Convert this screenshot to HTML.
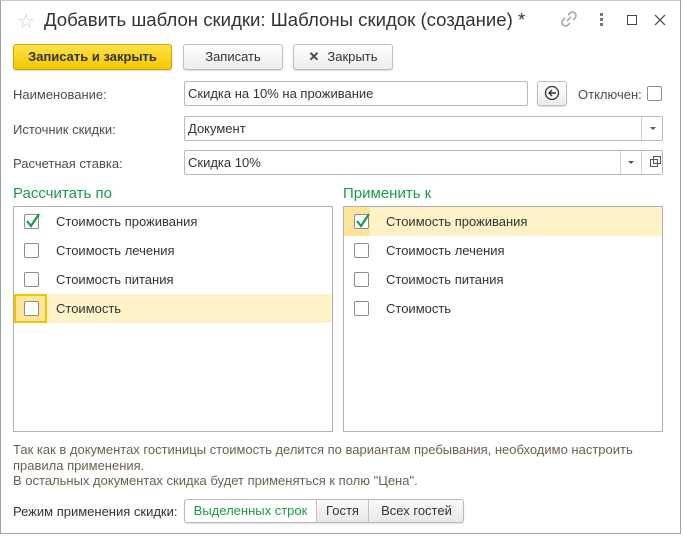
<!DOCTYPE html>
<html><head><meta charset="utf-8"><style>
*{box-sizing:border-box;margin:0;padding:0}
body{width:683px;height:536px;background:#fff;font-family:"Liberation Sans",sans-serif;font-size:13px;color:#333;position:relative;overflow:hidden}
.a{position:absolute}
.frame{left:0;top:0;width:681px;height:534px;border:1px solid #a0a0a0;border-top:1px solid #c8c8c8}
.btn{position:absolute;height:26px;border:1px solid #bdbdbd;border-radius:3px;background:linear-gradient(#fff,#ececec);text-align:center;line-height:24px;font-size:13px;color:#333;box-shadow:0 1px 1px rgba(0,0,0,.15)}
.inp{position:absolute;height:25px;border:1px solid #b9b9b9;border-radius:2px;background:#fff;line-height:23px;padding-left:3px;font-size:13px;color:#333}
.lbl{position:absolute;font-size:13px;color:#4d4d4d}
.sep{position:absolute;top:0;width:1px;height:23px;background:#d0d0d0}
.tri{position:absolute;top:10px;width:0;height:0;border-left:3px solid transparent;border-right:3px solid transparent;border-top:3px solid #555}
.list{position:absolute;border:1px solid #b0b0b0;background:#fff}
.row{position:absolute;left:0;width:318px;height:29px}
.cb{position:absolute;left:10px;top:7px;width:15px;height:15px;border:1px solid #8c8c8c;border-radius:2px;background:#fff}
.rt{position:absolute;left:42px;top:7px;font-size:13px;color:#333}
.hd{position:absolute;font-size:15px;color:#1a9a4a}
.note{position:absolute;left:13px;font-size:13px;color:#6b6050}
</style></head><body>
<div class="a frame"></div>
<div class="a" style="left:17px;top:9px;font-size:20px;color:#c8c8c8">☆</div>
<div class="a" style="left:44px;top:9px;font-size:18.6px;color:#333">Добавить шаблон скидки: Шаблоны скидок (создание) *</div>
<svg class="a" style="left:561px;top:11px" width="16" height="16" viewBox="0 0 16 16"><path d="M6 10 L10 6 M7 4 L9 2 a3 3 0 0 1 5 5 L12 9 M9 12 L7 14 a3 3 0 0 1 -5 -5 L4 7" stroke="#999" stroke-width="1.3" fill="none"/></svg>
<div class="a" style="left:600px;top:13px;width:3px;height:3px;background:#777;box-shadow:0 5px 0 #777,0 10px 0 #777"></div>
<div class="a" style="left:627px;top:15px;width:10px;height:10px;border:1.5px solid #444"></div>
<svg class="a" style="left:654px;top:14px" width="12" height="12"><path d="M1 1 L11 11 M11 1 L1 11" stroke="#555" stroke-width="1.3"/></svg>

<div class="btn" style="left:13px;top:44px;width:159px;background:linear-gradient(#ffe14a,#f2c800);border-color:#c9a700;font-weight:bold;color:#333">Записать и закрыть</div>
<div class="btn" style="left:183px;top:44px;width:100px">Записать</div>
<div class="btn" style="left:293px;top:44px;width:100px"><b style="margin-right:8px;color:#444">✕</b>Закрыть</div>

<div class="lbl" style="left:13px;top:87px">Наименование:</div>
<div class="inp" style="left:184px;top:81px;width:344px">Скидка на 10% на проживание</div>
<div class="btn" style="left:537px;top:81px;width:30px;height:25px"></div>
<svg class="a" style="left:544px;top:85px" width="16" height="16"><circle cx="8" cy="8" r="6.5" stroke="#333" stroke-width="1.3" fill="none"/><path d="M12 8 H5 M8 5 L5 8 L8 11" stroke="#333" stroke-width="1.4" fill="none"/></svg>
<div class="lbl" style="left:578px;top:87px">Отключен:</div>
<div class="a" style="left:647px;top:86px;width:15px;height:15px;border:1px solid #8c8c8c;border-radius:2px"></div>

<div class="lbl" style="left:13px;top:122px">Источник скидки:</div>
<div class="inp" style="left:184px;top:116px;width:479px">Документ<div class="sep" style="left:456px"></div><div class="tri" style="left:465px"></div></div>

<div class="lbl" style="left:13px;top:156px">Расчетная ставка:</div>
<div class="inp" style="left:184px;top:150px;width:479px">Скидка 10%<div class="sep" style="left:435px"></div><div class="tri" style="left:443px"></div><div class="sep" style="left:456px"></div>
<div class="a" style="left:465px;top:8px;width:8px;height:8px;border:1px solid #555;background:#fff"></div><div class="a" style="left:468px;top:5px;width:8px;height:8px;border:1px solid #555;background:transparent"></div></div>

<div class="hd" style="left:13px;top:185px">Рассчитать по</div>
<div class="hd" style="left:343px;top:185px">Применить к</div>

<div class="list" style="left:13px;top:206px;width:320px;height:226px">
 <div class="row" style="top:0"><div class="cb"></div><svg class="a" style="left:11px;top:6px" width="16" height="16"><path d="M2 8 L6 13 L14 1" stroke="#1a9a4a" stroke-width="2.2" fill="none"/></svg><div class="rt">Стоимость проживания</div></div>
 <div class="row" style="top:29px"><div class="cb"></div><div class="rt">Стоимость лечения</div></div>
 <div class="row" style="top:58px"><div class="cb"></div><div class="rt">Стоимость питания</div></div>
 <div class="row" style="top:87px;background:#fdf2c8"><div class="a" style="left:0;top:0;width:33px;height:29px;background:#fde59a;border:2px solid #f2c400"></div><div class="cb"></div><div class="rt">Стоимость</div></div>
</div>

<div class="list" style="left:343px;top:206px;width:320px;height:226px">
 <div class="row" style="top:0;background:#fdf2c8"><div class="a" style="left:0;top:0;width:26px;height:29px;background:#fde59a"></div><div class="cb"></div><svg class="a" style="left:11px;top:6px" width="16" height="16"><path d="M2 8 L6 13 L14 1" stroke="#1a9a4a" stroke-width="2.2" fill="none"/></svg><div class="rt">Стоимость проживания</div></div>
 <div class="row" style="top:29px"><div class="cb"></div><div class="rt">Стоимость лечения</div></div>
 <div class="row" style="top:58px"><div class="cb"></div><div class="rt">Стоимость питания</div></div>
 <div class="row" style="top:87px"><div class="cb"></div><div class="rt">Стоимость</div></div>
</div>

<div class="note" style="top:442px">Так как в документах гостиницы стоимость делится по вариантам пребывания, необходимо настроить</div>
<div class="note" style="top:458px">правила применения.</div>
<div class="note" style="top:473px">В остальных документах скидка будет применяться к полю "Цена".</div>

<div class="lbl" style="left:13px;top:504px;color:#333">Режим применения скидки:</div>
<div class="a" style="left:184px;top:499px;width:280px;height:24px;border:1px solid #b9b9b9;border-radius:3px;background:#fff;overflow:hidden;font-size:13px;line-height:22px;box-shadow:0 1px 1px rgba(0,0,0,.12)">
 <div class="a" style="left:0;top:0;width:131px;height:22px;text-align:center;color:#1a9a4a;background:#fff">Выделенных строк</div>
 <div class="a" style="left:131px;top:0;width:52px;height:22px;text-align:center;border-left:1px solid #c0c0c0;background:linear-gradient(#fafafa,#e8e8e8)">Гостя</div>
 <div class="a" style="left:183px;top:0;width:96px;height:22px;text-align:center;border-left:1px solid #c0c0c0;background:linear-gradient(#fafafa,#e8e8e8)">Всех гостей</div>
</div>
</body></html>
